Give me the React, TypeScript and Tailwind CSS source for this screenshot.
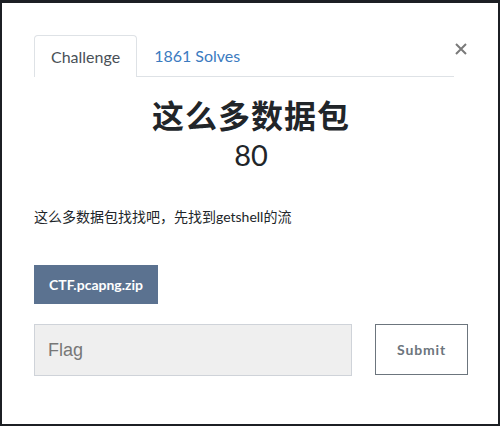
import React from "react";

export default function App() {
  return (
    <div className="w-[500px] h-[426px] bg-[#1c1f24] pt-[3px] pl-[2px] pr-[2px] pb-[2px] overflow-hidden" style={{ fontFamily: "Lato, 'Noto Sans CJK SC', sans-serif" }}>
      <div className="relative h-full bg-white pt-[32px] pl-[32px] pr-[30px]">
        <button className="absolute left-[451px] top-[38px] w-[16px] h-[16px] flex items-center justify-center" aria-label="close">
          <svg width="12" height="12" viewBox="0 0 12 12">
            <path d="M1 1 L11 11 M11 1 L1 11" stroke="#7a7a7a" strokeWidth="2" />
          </svg>
        </button>
        <div className="flex border-b border-[#dee2e6] h-[42px] mr-[14px]">
          <div className="h-[42px] px-[16px] flex items-center border border-b-0 border-[#dee2e6] rounded-t-[4px] bg-white text-[16px] text-[#495057]">
            Challenge
          </div>
          <div className="h-[41px] px-[17px] flex items-center text-[16px] text-[#3b7bbf]">
            1861 Solves
          </div>
        </div>
        <div className="mt-[17px] text-center text-[32px] leading-[40px] font-bold tracking-[1px] text-[#212529]" style={{ fontFamily: "'Noto Sans CJK SC', sans-serif" }}>
          这么多数据包
        </div>
        <div className="mt-[3px] text-center text-[29px] leading-[36px] text-[#212529]">80</div>
        <div className="mt-[34px] text-[14px] leading-[20px] text-[#212529]" style={{ fontFamily: "Lato, 'Noto Sans CJK SC', sans-serif" }}>
          这么多数据包找找吧，先找到getshell的流
        </div>
        <div className="mt-[38px]">
          <div className="inline-flex items-center justify-center w-[124px] h-[39px] bg-[#5b7290] text-white text-[14px] font-bold">
            CTF.pcapng.zip
          </div>
        </div>
        <div className="mt-[20px] flex items-start">
          <div className="shrink-0 w-[318px] h-[52px] bg-[#efefef] border border-[#cfd3d9] flex items-center pl-[13px] text-[18px] text-[#777]" style={{ fontFamily: "'Liberation Sans', Arial, sans-serif" }}>
            Flag
          </div>
          <div className="shrink-0 ml-[23px] w-[93px] h-[51px] border border-[#6c757d] flex items-center justify-center text-[14px] font-bold tracking-[0.06em] text-[#6c757d]">
            Submit
          </div>
        </div>
      </div>
    </div>
  );
}
